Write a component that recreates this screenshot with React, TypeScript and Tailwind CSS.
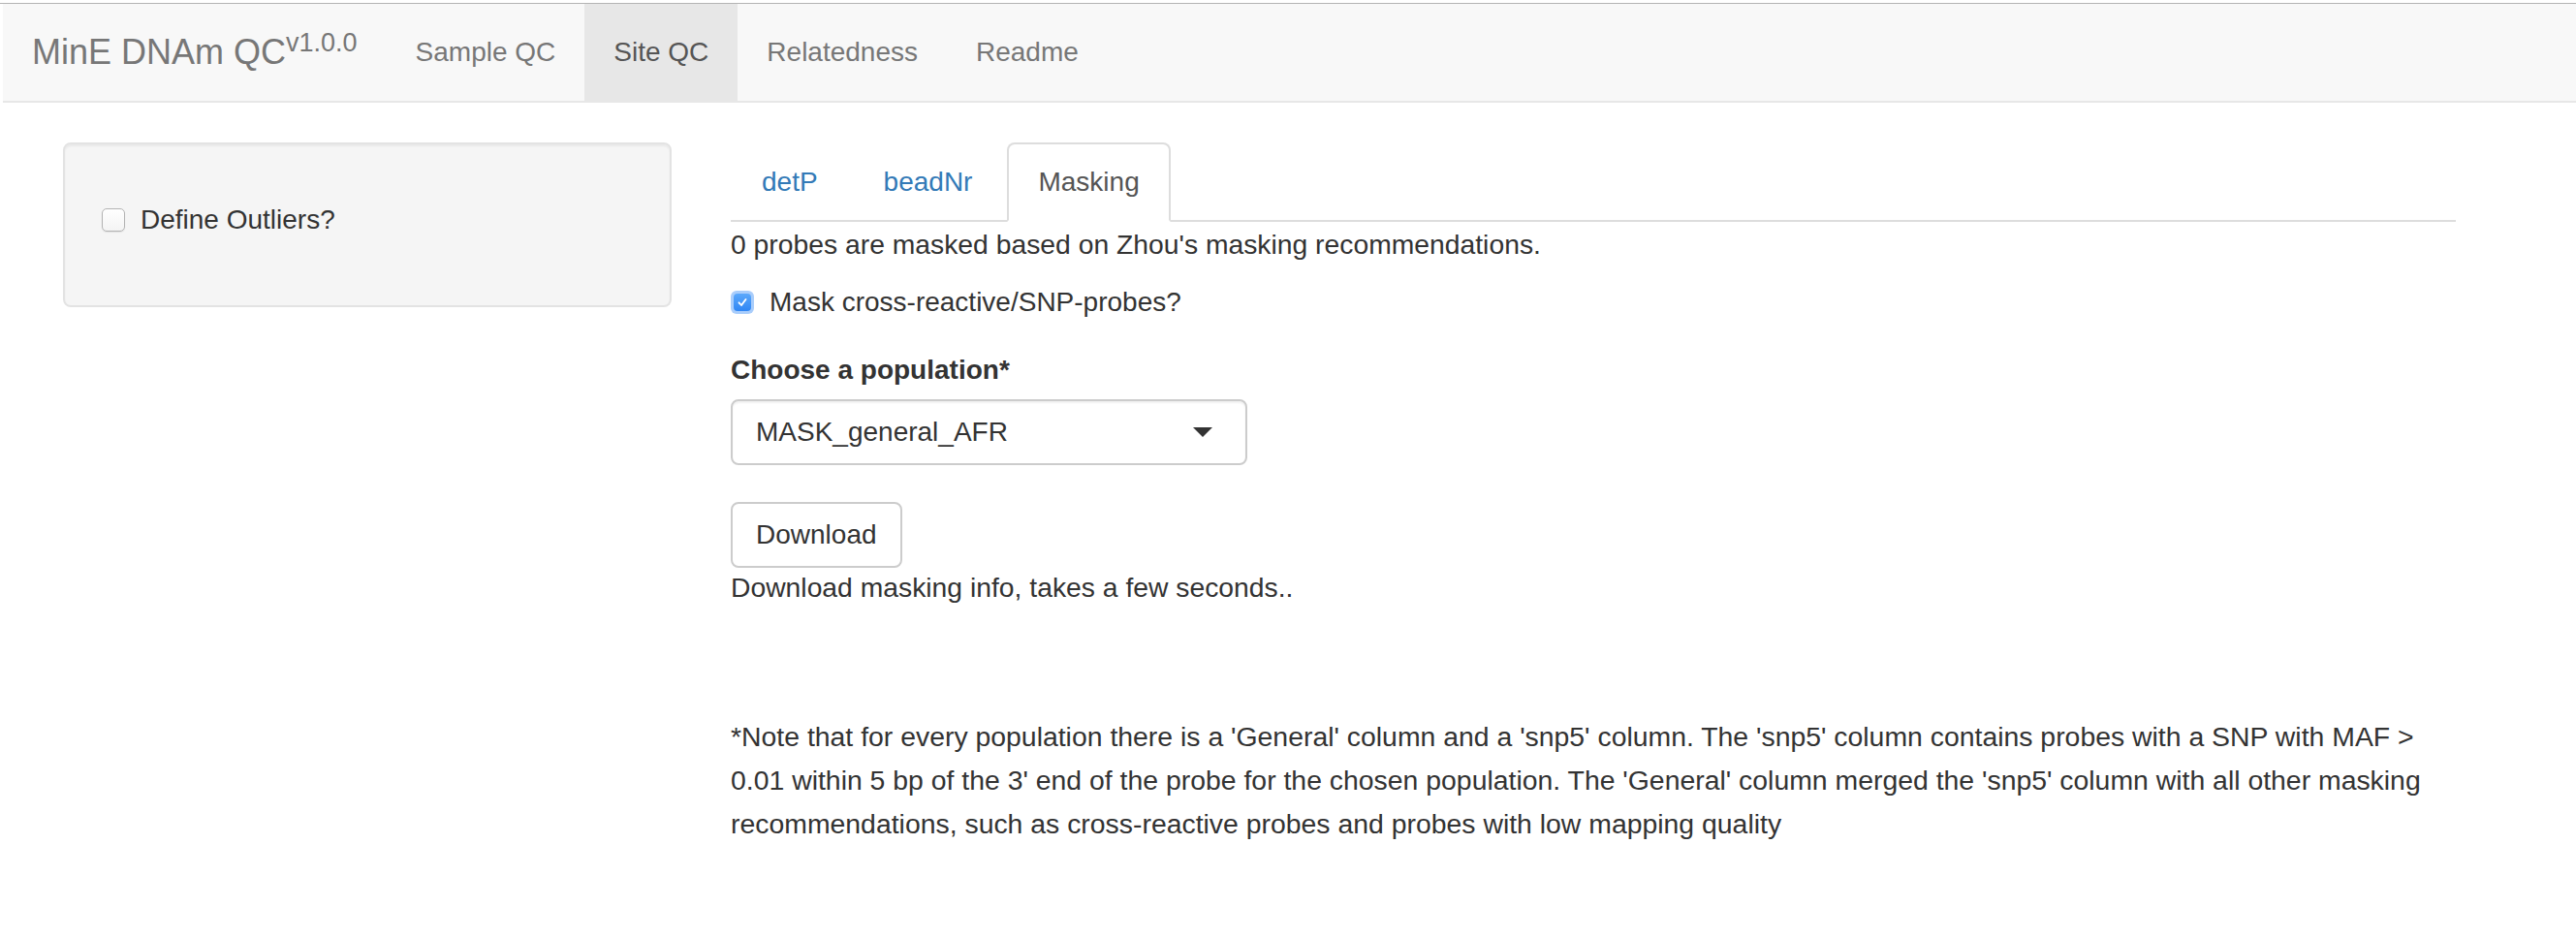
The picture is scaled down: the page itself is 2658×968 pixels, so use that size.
import React from "react";

const font = { fontFamily: '"Liberation Sans", Arial, Helvetica, sans-serif' };

function NavItem({ label, active }: { label: string; active?: boolean }) {
  return (
    <div
      className={
        "flex items-center px-[30px] text-[28px] leading-[40px] " +
        (active ? "bg-[#e7e7e7] text-[#555]" : "text-[#777]")
      }
    >
      {label}
    </div>
  );
}

function Tab({ label, active }: { label: string; active?: boolean }) {
  return (
    <div className="mr-[4px] mb-[-2px]">
      <div
        className={
          "border-2 rounded-t-[8px] px-[30px] py-[19px] text-[28px] leading-[40px] " +
          (active
            ? "border-[#ddd] border-b-transparent bg-white text-[#555]"
            : "border-transparent text-[#337ab7]")
        }
      >
        {label}
      </div>
    </div>
  );
}

export default function App() {
  return (
    <div className="min-h-[968px] bg-white text-[#333]" style={font}>
      <div className="pt-[3px]">
        <div className="border-t border-[#b4b4b4]">
          <nav className="ml-[3px] flex h-[102px] border-b-2 border-[#e7e7e7] bg-[#f8f8f8]">
            <div className="flex items-center px-[30px] text-[36px] leading-[40px] text-[#777]">
              <span>
                MinE DNAm QC<sup>v1.0.0</sup>
              </span>
            </div>
            <NavItem label="Sample QC" />
            <NavItem label="Site QC" active />
            <NavItem label="Relatedness" />
            <NavItem label="Readme" />
          </nav>
        </div>
      </div>

      <div className="flex items-start pt-[41px] pl-[65px]">
        {/* sidebar */}
        <div className="w-[628px] rounded-[8px] border-2 border-[#e3e3e3] bg-[#f5f5f5] px-[38px] pt-[38px] pb-[38px] shadow-[inset_0_2px_2px_rgba(0,0,0,0.05)]">
          <div className="mt-[20px] mb-[30px] flex h-[40px] items-center">
            <span className="h-[24px] w-[24px] shrink-0 rounded-[5px] border border-[#b3b3b3] bg-gradient-to-b from-white to-[#f4f4f4] shadow-[0_1px_1px_rgba(0,0,0,0.08)]" />
            <span className="ml-[16px] text-[28px] leading-[40px]">Define Outliers?</span>
          </div>
        </div>

        {/* main */}
        <div className="ml-[61px] w-[1780px]">
          <div className="flex border-b-2 border-[#ddd]">
            <Tab label="detP" />
            <Tab label="beadNr" />
            <Tab label="Masking" active />
          </div>

          <div className="mt-[3px] text-[28.3px] leading-[40px]">
            0 probes are masked based on Zhou's masking recommendations.
          </div>

          <div className="mt-[20px] flex h-[40px] items-center">
            <span className="flex h-[24px] w-[24px] shrink-0 items-center justify-center rounded-[6px] bg-[#a9cdfb] p-[3px]">
              <span className="flex h-[18px] w-[18px] items-center justify-center rounded-[4px] bg-gradient-to-b from-[#5ba8fb] to-[#2f86f4]">
                <svg width="12" height="12" viewBox="0 0 12 12">
                  <path
                    d="M2.5 6.3 L5 9 L9.5 3"
                    fill="none"
                    stroke="white"
                    strokeWidth="1.8"
                    strokeLinecap="round"
                    strokeLinejoin="round"
                  />
                </svg>
              </span>
            </span>
            <span className="ml-[16px] text-[28px] leading-[40px]">
              Mask cross-reactive/SNP-probes?
            </span>
          </div>

          <div className="mt-[30px] text-[28px] font-bold leading-[40px]">
            Choose a population*
          </div>

          <div className="mt-[10px] flex h-[68px] w-[533px] items-center justify-between rounded-[8px] border-2 border-[#ccc] bg-white pl-[24px] pr-[34px] shadow-[inset_0_2px_2px_rgba(0,0,0,0.06)]">
            <span className="text-[28px] leading-[40px]">MASK_general_AFR</span>
            <svg width="20" height="10" viewBox="0 0 20 10">
              <path d="M0 0 L20 0 L10 10 Z" fill="#333" />
            </svg>
          </div>

          <button className="mt-[38px] block h-[68px] rounded-[8px] border-2 border-[#ccc] bg-white px-[24px] text-[28px] leading-[40px] text-[#333]">
            Download
          </button>
          <div className="text-[28.3px] leading-[40px]">
            Download masking info, takes a few seconds..
          </div>

          <p className="mt-[112px] text-[28.4px] leading-[45px]">
            *Note that for every population there is a 'General' column and a 'snp5' column. The
            'snp5' column contains probes with a SNP with MAF &gt; 0.01 within 5 bp of the 3' end of
            the probe for the chosen population. The 'General' column merged the 'snp5' column with
            all other masking recommendations, such as cross-reactive probes and probes with low
            mapping quality
          </p>
        </div>
      </div>
    </div>
  );
}
